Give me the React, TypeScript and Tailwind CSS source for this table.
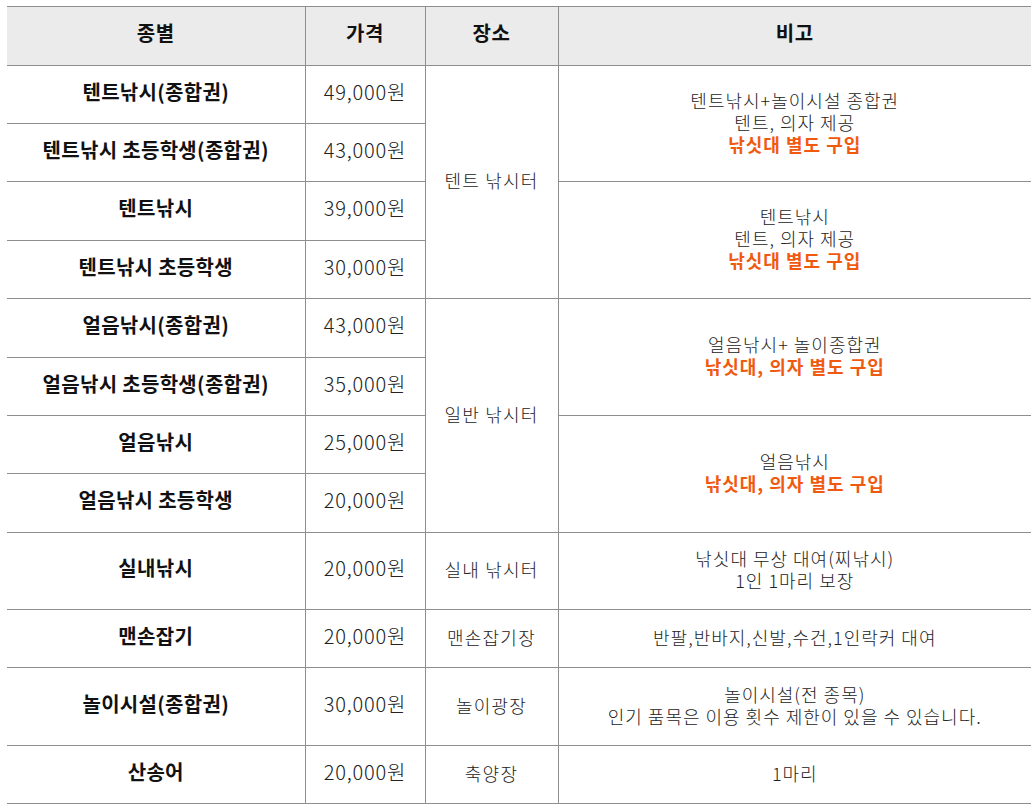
import React from "react";

const F = { fontFamily: '"Noto Sans CJK KR", "Noto Sans", sans-serif' };

type Row = {
  name: string;
  price: string;
  place?: { text: string; span: number };
  note?: { lines: { t: string; o?: boolean }[]; span: number };
  h: string;
};

const rows: Row[] = [
  { name: "텐트낚시(종합권)", price: "49,000원", place: { text: "텐트 낚시터", span: 4 }, note: { lines: [{ t: "텐트낚시+놀이시설 종합권" }, { t: "텐트, 의자 제공" }, { t: "낚싯대 별도 구입", o: true }], span: 2 }, h: "h-[58px]" },
  { name: "텐트낚시 초등학생(종합권)", price: "43,000원", h: "h-[58px]" },
  { name: "텐트낚시", price: "39,000원", note: { lines: [{ t: "텐트낚시" }, { t: "텐트, 의자 제공" }, { t: "낚싯대 별도 구입", o: true }], span: 2 }, h: "h-[59px]" },
  { name: "텐트낚시 초등학생", price: "30,000원", h: "h-[58px]" },
  { name: "얼음낚시(종합권)", price: "43,000원", place: { text: "일반 낚시터", span: 4 }, note: { lines: [{ t: "얼음낚시+ 놀이종합권" }, { t: "낚싯대, 의자 별도 구입", o: true }], span: 2 }, h: "h-[59px]" },
  { name: "얼음낚시 초등학생(종합권)", price: "35,000원", h: "h-[58px]" },
  { name: "얼음낚시", price: "25,000원", note: { lines: [{ t: "얼음낚시" }, { t: "낚싯대, 의자 별도 구입", o: true }], span: 2 }, h: "h-[58px]" },
  { name: "얼음낚시 초등학생", price: "20,000원", h: "h-[59px]" },
  { name: "실내낚시", price: "20,000원", place: { text: "실내 낚시터", span: 1 }, note: { lines: [{ t: "낚싯대 무상 대여(찌낚시)" }, { t: "1인 1마리 보장" }], span: 1 }, h: "h-[77px]" },
  { name: "맨손잡기", price: "20,000원", place: { text: "맨손잡기장", span: 1 }, note: { lines: [{ t: "반팔,반바지,신발,수건,1인락커 대여" }], span: 1 }, h: "h-[58px]" },
  { name: "놀이시설(종합권)", price: "30,000원", place: { text: "놀이광장", span: 1 }, note: { lines: [{ t: "놀이시설(전 종목)" }, { t: "인기 품목은 이용 횟수 제한이 있을 수 있습니다." }], span: 1 }, h: "h-[78px]" },
  { name: "산송어", price: "20,000원", place: { text: "축양장", span: 1 }, note: { lines: [{ t: "1마리" }], span: 1 }, h: "h-[58px]" },
];

export default function App() {
  return (
    <div className="bg-white w-[1035px] h-[808px] pt-[6px] pl-[7px]" style={F}>
      <table className="table-fixed border-collapse w-[1024px]">
        <colgroup>
          <col className="w-[298px]" />
          <col className="w-[120px]" />
          <col className="w-[133px]" />
          <col className="w-[473px]" />
        </colgroup>
        <thead>
          <tr className="h-[59px] bg-[#ebebeb] text-[20px] leading-[24px] tracking-[0.5px] font-bold text-[#111]">
            <th className="border-t border-b border-[#8e8e8e] align-middle pb-[6px]">종별</th>
            <th className="border border-[#8e8e8e] align-middle pb-[6px]">가격</th>
            <th className="border border-[#8e8e8e] align-middle pb-[6px]">장소</th>
            <th className="border-t border-b border-l border-[#8e8e8e] align-middle pb-[6px]">비고</th>
          </tr>
        </thead>
        <tbody>
          {rows.map((r, i) => (
            <tr key={i} className={r.h}>
              <td className="border-b border-[#8e8e8e] text-center align-middle text-[20px] leading-[24px] tracking-[0.3px] font-bold text-[#111] pb-[6px]">{r.name}</td>
              <td className="border border-[#8e8e8e] text-center align-middle text-[20px] leading-[24px] tracking-[0.8px] font-light text-[#222] pb-[6px]">{r.price}</td>
              {r.place && (
                <td rowSpan={r.place.span} className="border border-[#8e8e8e] text-center align-middle text-[18px] leading-[22px] tracking-[1.2px] font-light text-[#222] pb-[4px]">
                  {r.place.text}
                </td>
              )}
              {r.note && (
                <td rowSpan={r.note.span} className="border-b border-l border-[#8e8e8e] text-center align-middle text-[18px] leading-[22px] tracking-[1px] text-[#222] pb-[4px]">
                  {r.note.lines.map((l, j) => (
                    <div key={j} className={l.o ? "font-bold text-[#f05a0f]" : "font-light"}>{l.t}</div>
                  ))}
                </td>
              )}
            </tr>
          ))}
        </tbody>
      </table>
    </div>
  );
}
